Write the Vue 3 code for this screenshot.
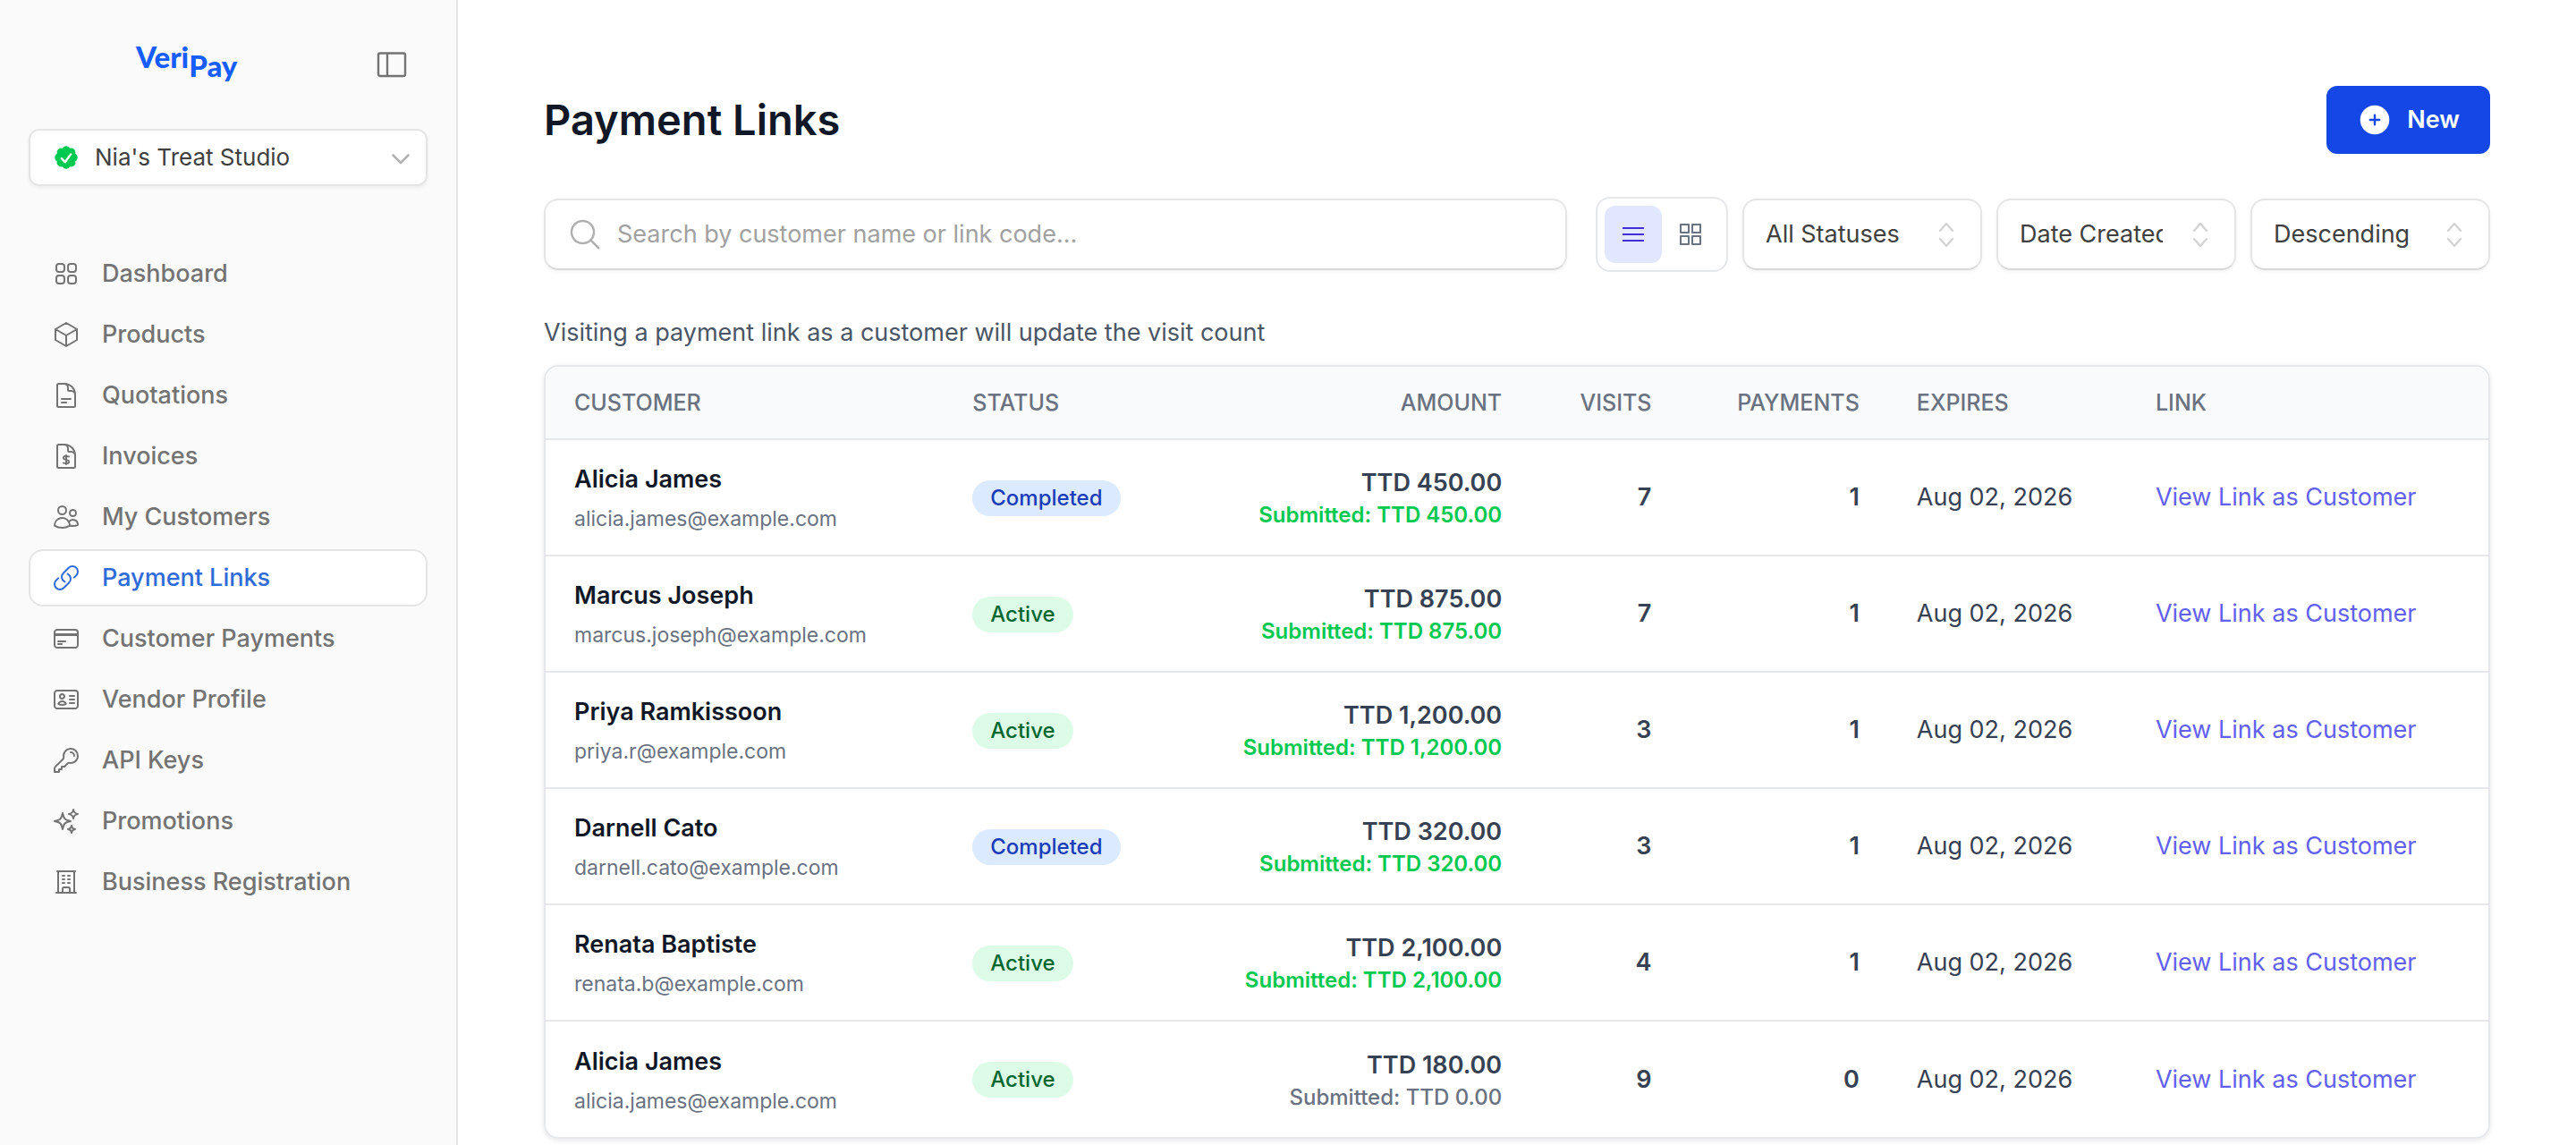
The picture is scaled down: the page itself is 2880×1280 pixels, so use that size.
<script setup>
import { ref } from 'vue'

const file = 'M10.5 2.25H5.625c-.621 0-1.125.504-1.125 1.125v17.25c0 .621.504 1.125 1.125 1.125h12.75c.621 0 1.125-.504 1.125-1.125V11.25a9 9 0 0 0-9-9Z'
const fold = 'M19.5 14.25v-2.625a3.375 3.375 0 0 0-3.375-3.375h-1.5A1.125 1.125 0 0 1 13.5 7.125v-1.5a3.375 3.375 0 0 0-3.375-3.375H8.25'
const card = 'M4.5 19.5h15a2.25 2.25 0 0 0 2.25-2.25V6.75A2.25 2.25 0 0 0 19.5 4.5h-15a2.25 2.25 0 0 0-2.25 2.25v10.5A2.25 2.25 0 0 0 4.5 19.5Z'

const nav = [
  { label: 'Dashboard', icon: 'M3.75 6A2.25 2.25 0 0 1 6 3.75h2.25A2.25 2.25 0 0 1 10.5 6v2.25a2.25 2.25 0 0 1-2.25 2.25H6a2.25 2.25 0 0 1-2.25-2.25V6ZM3.75 15.75A2.25 2.25 0 0 1 6 13.5h2.25a2.25 2.25 0 0 1 2.25 2.25V18a2.25 2.25 0 0 1-2.25 2.25H6A2.25 2.25 0 0 1 3.75 18v-2.25ZM13.5 6a2.25 2.25 0 0 1 2.25-2.25H18A2.25 2.25 0 0 1 20.25 6v2.25A2.25 2.25 0 0 1 18 10.5h-2.25a2.25 2.25 0 0 1-2.25-2.25V6ZM13.5 15.75a2.25 2.25 0 0 1 2.25-2.25H18a2.25 2.25 0 0 1 2.25 2.25V18A2.25 2.25 0 0 1 18 20.25h-2.25A2.25 2.25 0 0 1 13.5 18v-2.25Z' },
  { label: 'Products', icon: 'm21 7.5-9-5.25L3 7.5m18 0-9 5.25m9-5.25v9l-9 5.25M3 7.5l9 5.25M3 7.5v9l9 5.25m0-9v9' },
  { label: 'Quotations', icon: fold + 'm0 12.75h7.5m-7.5 3H12' + file },
  { label: 'Invoices', icon: fold + 'm3.75 9v7.5m2.25-6.466a9.016 9.016 0 0 0-3.461-.203c-.536.072-.974.478-1.021 1.017a4.559 4.559 0 0 0-.018.402c0 .464.336.844.775.994l2.95 1.012c.44.15.775.53.775.994 0 .136-.006.27-.018.402-.047.539-.485.945-1.021 1.017a9.077 9.077 0 0 1-3.461-.203' + file },
  { label: 'My Customers', icon: 'M15 19.128a9.38 9.38 0 0 0 2.625.372 9.337 9.337 0 0 0 4.121-.952 4.125 4.125 0 0 0-7.533-2.493M15 19.128v-.003c0-1.113-.285-2.16-.786-3.07M15 19.128v.106A12.318 12.318 0 0 1 8.624 21c-2.331 0-4.512-.645-6.374-1.766l-.001-.109a6.375 6.375 0 0 1 11.964-3.07M12 6.375a3.375 3.375 0 1 1-6.75 0 3.375 3.375 0 0 1 6.75 0Zm8.25 2.25a2.625 2.625 0 1 1-5.25 0 2.625 2.625 0 0 1 5.25 0Z' },
  { label: 'Payment Links', current: true, icon: 'M13.19 8.688a4.5 4.5 0 0 1 1.242 7.244l-4.5 4.5a4.5 4.5 0 0 1-6.364-6.364l1.757-1.757m13.35-.622 1.757-1.757a4.5 4.5 0 0 0-6.364-6.364l-4.5 4.5a4.5 4.5 0 0 0 1.242 7.244' },
  { label: 'Customer Payments', icon: 'M2.25 8.25h19.5M2.25 9h19.5m-16.5 5.25h6m-6 2.25h3' + card },
  { label: 'Vendor Profile', icon: 'M15 9h3.75M15 12h3.75M15 15h3.75' + card + 'm6-10.125a1.875 1.875 0 1 1-3.75 0 1.875 1.875 0 0 1 3.75 0Zm1.294 6.336a6.721 6.721 0 0 1-3.17.789 6.721 6.721 0 0 1-3.168-.789 3.376 3.376 0 0 1 6.338 0Z' },
  { label: 'API Keys', icon: 'M15.75 5.25a3 3 0 0 1 3 3m3 0a6 6 0 0 1-7.029 5.912c-.563-.097-1.159.026-1.563.43L10.5 17.25H8.25v2.25H6v2.25H2.25v-2.818c0-.597.237-1.17.659-1.591l6.499-6.499c.404-.404.527-1 .43-1.563A6 6 0 1 1 21.75 8.25Z' },
  { label: 'Promotions', icon: 'M9.813 15.904 9 18.75l-.813-2.846a4.5 4.5 0 0 0-3.09-3.09L2.25 12l2.846-.813a4.5 4.5 0 0 0 3.09-3.09L9 5.25l.813 2.846a4.5 4.5 0 0 0 3.09 3.09L15.75 12l-2.846.813a4.5 4.5 0 0 0-3.09 3.09ZM18.259 8.715 18 9.75l-.259-1.035a3.375 3.375 0 0 0-2.455-2.456L14.25 6l1.036-.259a3.375 3.375 0 0 0 2.455-2.456L18 2.25l.259 1.035a3.375 3.375 0 0 0 2.456 2.456L21.75 6l-1.035.259a3.375 3.375 0 0 0-2.456 2.456ZM16.894 20.567 16.5 21.75l-.394-1.183a2.25 2.25 0 0 0-1.423-1.423L13.5 18.75l1.183-.394a2.25 2.25 0 0 0 1.423-1.423l.394-1.183.394 1.183a2.25 2.25 0 0 0 1.423 1.423l1.183.394-1.183.394a2.25 2.25 0 0 0-1.423 1.423Z' },
  { label: 'Business Registration', icon: 'M3.75 21h16.5M4.5 3h15M5.25 3v18m13.5-18v18M9 6.75h1.5m-1.5 3h1.5m-1.5 3h1.5m3-6H15m-1.5 3H15m-1.5 3H15M9 21v-3.375c0-.621.504-1.125 1.125-1.125h3.75c.621 0 1.125.504 1.125 1.125V21' },
]

const filters = [
  { label: 'Status', options: ['All Statuses', 'Active', 'Completed'] },
  { label: 'Sort by', options: ['Date Created', 'Amount'] },
  { label: 'Sort order', options: ['Descending', 'Ascending'] },
]

const rows = [
  { name: 'Alicia James', email: 'alicia.james@example.com', status: 'Completed', amount: '450.00', submitted: '450.00', visits: 7, payments: 1 },
  { name: 'Marcus Joseph', email: 'marcus.joseph@example.com', status: 'Active', amount: '875.00', submitted: '875.00', visits: 7, payments: 1 },
  { name: 'Priya Ramkissoon', email: 'priya.r@example.com', status: 'Active', amount: '1,200.00', submitted: '1,200.00', visits: 3, payments: 1 },
  { name: 'Darnell Cato', email: 'darnell.cato@example.com', status: 'Completed', amount: '320.00', submitted: '320.00', visits: 3, payments: 1 },
  { name: 'Renata Baptiste', email: 'renata.b@example.com', status: 'Active', amount: '2,100.00', submitted: '2,100.00', visits: 4, payments: 1 },
  { name: 'Alicia James', email: 'alicia.james@example.com', status: 'Active', amount: '180.00', submitted: '0.00', visits: 9, payments: 0 },
]

const view = ref('list')
const search = ref('')
</script>

<template>
  <div class="layout">
    <aside class="sidebar">
      <div class="brand">
        <a class="logo" href="#" aria-label="VeriPay"><span>Veri</span><span class="logo-low">Pay</span></a>
        <button class="collapse" type="button" aria-label="Toggle sidebar">
          <svg width="40" height="40" viewBox="0 0 40 40" fill="none" stroke="currentColor" stroke-width="2.4"><rect x="5" y="7.5" width="30" height="25.5" rx="2" /><path d="M15 7.5v25.5" /></svg>
        </button>
      </div>

      <button class="studio" type="button">
        <svg class="verified" width="32" height="32" viewBox="0 0 20 20" fill="currentColor"><path fill-rule="evenodd" d="M16.403 12.652a3 3 0 0 0 0-5.304 3 3 0 0 0-3.75-3.751 3 3 0 0 0-5.305 0 3 3 0 0 0-3.751 3.75 3 3 0 0 0 0 5.305 3 3 0 0 0 3.75 3.751 3 3 0 0 0 5.305 0 3 3 0 0 0 3.751-3.75Zm-2.546-4.46a.75.75 0 0 0-1.214-.883l-3.483 4.79-1.88-1.88a.75.75 0 1 0-1.06 1.061l2.5 2.5a.75.75 0 0 0 1.137-.089l4-5.5Z" clip-rule="evenodd" /></svg>
        <span class="studio-name">Nia's Treat Studio</span>
        <svg class="chevron" width="32" height="32" viewBox="0 0 32 32" fill="none" stroke="currentColor" stroke-width="2.6" stroke-linecap="round" stroke-linejoin="round"><path d="m7.5 13.5 8.5 8.5 8.5-8.5" /></svg>
      </button>

      <nav class="nav" aria-label="Main">
        <a v-for="item in nav" :key="item.label" class="nav-item" :class="{ current: item.current }" href="#">
          <svg width="32" height="32" viewBox="0 0 24 24" fill="none" stroke="currentColor" stroke-width="1.5" stroke-linecap="round" stroke-linejoin="round"><path :d="item.icon" /></svg>
          <span>{{ item.label }}</span>
        </a>
      </nav>
    </aside>

    <main class="main">
      <header class="heading">
        <h1>Payment Links</h1>
        <button class="new" type="button">
          <svg width="40" height="40" viewBox="0 0 40 40"><circle cx="20" cy="20" r="16.3" fill="#fff" /><path d="M20 14.8v10.4M14.8 20h10.4" stroke="#1447e6" stroke-width="2.4" stroke-linecap="round" /></svg>
          <span>New</span>
        </button>
      </header>

      <div class="controls">
        <label class="search">
          <svg width="40" height="40" viewBox="0 0 24 24" fill="none" stroke="currentColor" stroke-width="1.5" stroke-linecap="round" stroke-linejoin="round"><path d="m21 21-5.197-5.197m0 0A7.5 7.5 0 1 0 5.196 5.196a7.5 7.5 0 0 0 10.607 10.607Z" /></svg>
          <input v-model="search" type="text" aria-label="Search payment links" placeholder="Search by customer name or link code..." />
        </label>
        <div class="filters">
          <div class="views" role="group" aria-label="View">
            <button type="button" :class="{ on: view === 'list' }" aria-label="List view" @click="view = 'list'">
              <svg width="32" height="32" viewBox="0 0 32 32" fill="none" stroke="currentColor" stroke-width="2"><path d="M4 9h24M4 16h24M4 23h24" /></svg>
            </button>
            <button type="button" :class="{ on: view === 'grid' }" aria-label="Grid view" @click="view = 'grid'">
              <svg width="32" height="32" viewBox="0 0 32 32" fill="none" stroke="currentColor" stroke-width="2"><path d="M5 5h9v9H5zM18 5h9v9h-9zM5 18h9v9H5zM18 18h9v9h-9z" stroke-linejoin="round" /></svg>
            </button>
          </div>
          <div v-for="filter in filters" :key="filter.label" class="select">
            <select :aria-label="filter.label">
              <option v-for="option in filter.options" :key="option">{{ option }}</option>
            </select>
            <svg width="32" height="32" viewBox="0 0 32 32" fill="none" stroke="currentColor" stroke-width="2.4" stroke-linecap="round" stroke-linejoin="round"><path d="m9 12 7-8 7 8M9 21l7 8 7-8" /></svg>
          </div>
        </div>
      </div>

      <p class="note">Visiting a payment link as a customer will update the visit count</p>

      <div class="panel">
        <table>
          <colgroup>
            <col class="c-customer" /><col class="c-status" /><col class="c-amount" /><col class="c-visits" /><col class="c-payments" /><col class="c-expires" /><col />
          </colgroup>
          <thead>
            <tr>
              <th scope="col">CUSTOMER</th>
              <th scope="col">STATUS</th>
              <th scope="col" class="num">AMOUNT</th>
              <th scope="col" class="num">VISITS</th>
              <th scope="col" class="num">PAYMENTS</th>
              <th scope="col">EXPIRES</th>
              <th scope="col">LINK</th>
            </tr>
          </thead>
          <tbody>
            <tr v-for="(row, i) in rows" :key="i">
              <td>
                <div class="name">{{ row.name }}</div>
                <div class="email">{{ row.email }}</div>
              </td>
              <td><span class="pill" :class="row.status.toLowerCase()">{{ row.status }}</span></td>
              <td class="num">
                <div class="amount">TTD {{ row.amount }}</div>
                <div class="submitted" :class="{ paid: row.payments > 0 }">Submitted: TTD {{ row.submitted }}</div>
              </td>
              <td class="num count">{{ row.visits }}</td>
              <td class="num count">{{ row.payments }}</td>
              <td>Aug 02, 2026</td>
              <td><a class="link" href="#">View Link as Customer</a></td>
            </tr>
          </tbody>
        </table>
      </div>
    </main>
  </div>
</template>

<style>
body {
  margin: 0;
  background: #fff;
}
</style>

<style scoped>
.layout {
  display: flex;
  min-height: 100vh;
  font: 400 27px/40px Inter, "Liberation Sans", sans-serif;
  color: #404040;
}
.layout * {
  box-sizing: border-box;
}
button,
input,
select {
  font: inherit;
  color: inherit;
  margin: 0;
}
button {
  cursor: pointer;
}
svg {
  flex: none;
  display: block;
}
a {
  text-decoration: none;
}

.sidebar {
  flex: none;
  width: 512px;
  padding: 32px;
  border-right: 2px solid #e5e5e5;
  background: #fafafa;
}
.brand {
  display: flex;
  align-items: center;
  justify-content: space-between;
  height: 80px;
  padding: 0 20px 0 120px;
}
.logo {
  display: flex;
  padding-bottom: 8px;
  font: 900 33px/40px Lato, sans-serif;
  color: #155dfc;
}
.logo-low {
  padding-top: 10px;
}
.collapse {
  padding: 0;
  border: 0;
  background: none;
  color: #737373;
}
.studio {
  display: flex;
  align-items: center;
  width: 100%;
  height: 64px;
  margin-top: 32px;
  padding: 0 12px 0 24px;
  border: 2px solid #e5e5e5;
  border-radius: 12px;
  background: #fff;
  box-shadow: 0 2px 4px rgba(0, 0, 0, 0.06);
}
.verified {
  color: #00c951;
}
.studio-name {
  flex: 1;
  padding-left: 16px;
  font-size: 26px;
  text-align: left;
}
.chevron {
  color: #b3b3b3;
}
.nav {
  display: flex;
  flex-direction: column;
  gap: 4px;
  margin-top: 66px;
}
.nav-item {
  display: flex;
  align-items: center;
  gap: 24px;
  height: 64px;
  padding: 0 24px;
  border: 2px solid transparent;
  border-radius: 16px;
  font-weight: 500;
  color: #737373;
}
.nav-item.current {
  border-color: #e5e5e5;
  background: #fff;
  color: #2f6bd8;
}

.main {
  flex: 1;
  min-width: 0;
  padding: 96px 96px 0;
}
.heading {
  display: flex;
  align-items: center;
  justify-content: space-between;
}
h1 {
  margin: 0;
  font-size: 47px;
  line-height: 64px;
  font-weight: 600;
  color: #101828;
}
.new {
  display: flex;
  align-items: center;
  gap: 16px;
  height: 76px;
  padding: 0 34px;
  border: 0;
  border-radius: 12px;
  background: #1447e6;
  font-weight: 600;
  color: #fff;
}
.controls {
  display: flex;
  align-items: center;
  gap: 32px;
  margin-top: 48px;
}
.search {
  flex: 1;
  display: flex;
  align-items: center;
  gap: 16px;
  height: 80px;
  padding: 0 24px;
  border: 2px solid #e5e5e5;
  border-bottom-color: #d9d9d9;
  border-radius: 16px;
  box-shadow: 0 2px 4px rgba(0, 0, 0, 0.05);
  color: #b0b0b0;
}
.search input {
  flex: 1;
  min-width: 0;
  padding: 0;
  border: 0;
  outline: 0;
  background: none;
  color: #404040;
}
.search input::placeholder {
  color: #a1a1a1;
  opacity: 1;
}
.filters {
  display: flex;
  align-items: center;
  gap: 16px;
}
.views {
  display: flex;
  padding: 8px;
  border: 2px solid #e5e7eb;
  border-radius: 16px;
}
.views button {
  display: grid;
  place-items: center;
  width: 64px;
  height: 64px;
  padding: 0;
  border: 0;
  border-radius: 12px;
  background: none;
  color: #6b7280;
}
.views button.on {
  background: #e0e7ff;
  color: #432dd7;
}
.select {
  display: grid;
  align-items: center;
}
.select select {
  grid-area: 1 / 1;
  appearance: none;
  width: 268px;
  height: 80px;
  padding: 0 80px 0 24px;
  border: 2px solid #e5e5e5;
  border-bottom-color: #d9d9d9;
  border-radius: 16px;
  background: #fff;
  box-shadow: 0 2px 4px rgba(0, 0, 0, 0.05);
  text-overflow: clip;
}
.select svg {
  grid-area: 1 / 1;
  justify-self: end;
  margin-right: 24px;
  pointer-events: none;
  color: #d4d4d4;
}
.note {
  margin: 48px 0 16px;
  color: #4a5565;
}

.panel {
  overflow: hidden;
  border: 2px solid #e5e7eb;
  border-radius: 16px;
  box-shadow: 0 2px 6px rgba(0, 0, 0, 0.1);
}
table {
  width: 100%;
  table-layout: fixed;
  border-collapse: collapse;
}
.c-customer { width: 20.5%; }
.c-status { width: 13.2%; }
.c-amount { width: 17%; }
.c-visits { width: 7.7%; }
.c-payments { width: 10.7%; }
.c-expires { width: 12.3%; }
th,
td {
  padding: 0 32px;
  text-align: left;
  white-space: nowrap;
}
th {
  height: 81px;
  background: #f9fafb;
  font-size: 25px;
  line-height: 32px;
  font-weight: 500;
  color: #6a7282;
}
td {
  height: 130px;
  border-top: 2px solid #e5e7eb;
  color: #364153;
}
.num {
  text-align: right;
}
.name {
  font-weight: 600;
  color: #101828;
}
.email {
  margin-top: 8px;
  font-size: 23px;
  line-height: 32px;
  color: #6a7282;
}
.pill {
  display: inline-block;
  padding: 4px 20px;
  border-radius: 20px;
  font-size: 24px;
  line-height: 32px;
  font-weight: 500;
  vertical-align: middle;
}
.pill.completed {
  background: #dbeafe;
  color: #193cb8;
}
.pill.active {
  background: #dcfce7;
  color: #016630;
}
.amount,
.count {
  font-weight: 600;
}
.submitted {
  font-size: 24px;
  line-height: 32px;
  font-weight: 500;
  color: #6a7282;
}
.submitted.paid {
  font-weight: 600;
  color: #00c951;
}
.link {
  color: #6260f0;
}
</style>
